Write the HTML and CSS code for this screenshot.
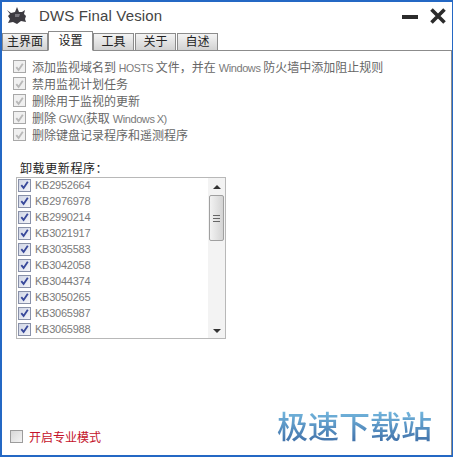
FILE: index.html
```html
<!DOCTYPE html>
<html>
<head>
<meta charset="utf-8">
<title>DWS Final Vesion</title>
<link rel="stylesheet" href="styles.css">
</head>
<body>
<svg class="defs" width="0" height="0">
    <symbol id="tick" viewBox="0 0 12 12">
        <path d="M2.5 6.2 L5 9.2 L9.6 2.4" fill="none" stroke-width="2"/>
    </symbol>
</svg>
<div class="window">
    <header class="titlebar">
        <svg class="logo" width="22" height="20" viewBox="0 0 22 20">
            <path d="M1 4 L5 7 L9 6 L11 1 L13 6 L16 6 L19 4 L18 8 L20 10 L19 13 L20 16 L15 15 L11 18 L7 16 L2 17 L4 13 L2 10 L4 8 Z" fill="#3c3a40"/>
            <path d="M9 8 L14 8 L13 11 L9 11 Z" fill="#77757c"/>
        </svg>
        <h1 class="title">DWS Final Vesion</h1>
        <svg class="winbtn" width="18" height="18" viewBox="0 0 18 18">
            <rect x="0" y="8" width="16" height="4" fill="#2b2b2b"/>
        </svg>
        <svg class="winbtn" width="18" height="18" viewBox="0 0 18 18">
            <path d="M2.5 2.5 L15.5 15.5 M15.5 2.5 L2.5 15.5" stroke="#2b2b2b" stroke-width="3.6" fill="none"/>
        </svg>
    </header>

    <nav class="tabs">
        <span class="tab tab-wide">主界面</span>
        <span class="tab active">设置</span>
        <span class="tab">工具</span>
        <span class="tab">关于</span>
        <span class="tab">自述</span>
    </nav>

    <main class="panel">
        <div class="options">
            <label class="option"><span class="check off"><svg width="12" height="12"><use href="#tick"/></svg></span><span class="text">添加监视域名到 <span class="lat caps">HOSTS</span> 文件，并在 <span class="lat">Windows</span> 防火墙中添加阻止规则</span></label>
            <label class="option"><span class="check off"><svg width="12" height="12"><use href="#tick"/></svg></span><span class="text">禁用监视计划任务</span></label>
            <label class="option"><span class="check off"><svg width="12" height="12"><use href="#tick"/></svg></span><span class="text">删除用于监视的更新</span></label>
            <label class="option"><span class="check off"><svg width="12" height="12"><use href="#tick"/></svg></span><span class="text">删除 <span class="lat caps">GWX(</span>获取 <span class="lat">Windows X)</span></span></label>
            <label class="option"><span class="check off"><svg width="12" height="12"><use href="#tick"/></svg></span><span class="text">删除键盘记录程序和遥测程序</span></label>
        </div>

        <div class="updates-label">卸载更新程序：</div>
        <div class="listbox">
            <ul class="items">
                <li><span class="check on"><svg width="12" height="12"><use href="#tick"/></svg></span>KB2952664</li>
                <li><span class="check on"><svg width="12" height="12"><use href="#tick"/></svg></span>KB2976978</li>
                <li><span class="check on"><svg width="12" height="12"><use href="#tick"/></svg></span>KB2990214</li>
                <li><span class="check on"><svg width="12" height="12"><use href="#tick"/></svg></span>KB3021917</li>
                <li><span class="check on"><svg width="12" height="12"><use href="#tick"/></svg></span>KB3035583</li>
                <li><span class="check on"><svg width="12" height="12"><use href="#tick"/></svg></span>KB3042058</li>
                <li><span class="check on"><svg width="12" height="12"><use href="#tick"/></svg></span>KB3044374</li>
                <li><span class="check on"><svg width="12" height="12"><use href="#tick"/></svg></span>KB3050265</li>
                <li><span class="check on"><svg width="12" height="12"><use href="#tick"/></svg></span>KB3065987</li>
                <li><span class="check on"><svg width="12" height="12"><use href="#tick"/></svg></span>KB3065988</li>
            </ul>
            <div class="scrollbar">
                <span class="arrow arrow-up"></span>
                <div class="thumb"><span class="grip"></span></div>
                <span class="arrow arrow-down"></span>
            </div>
        </div>

        <label class="pro"><span class="check pro-box"></span>开启专业模式</label>
    </main>
    <div class="watermark">极速下载站</div>
</div>
</body>
</html>
```

FILE: styles.css
```css
* {
    box-sizing: border-box;
}
html, body {
    height: 100%;
}
body {
    margin: 0;
    background: #fff;
    font-family: 'Liberation Sans', 'Noto Sans CJK SC', sans-serif;
    font-size: 12px;
    color: #666;
}
.defs {
    position: absolute;
}
.window {
    position: relative;
    display: flex;
    flex-direction: column;
    height: 457px;
    border: 1px solid #2468c4;
    border-left-width: 2px;
    border-bottom-width: 2px;
    border-top-width: 2px;
    background: #fff;
}
.titlebar {
    display: flex;
    align-items: center;
    height: 29px;
    padding: 0 5px 2px 4px;
    flex: none;
}
.logo {
    flex: none;
}
.title {
    flex: 1;
    margin: 0 0 0 11px;
    font-size: 15px;
    font-weight: normal;
    color: #444;
    letter-spacing: 0.15px;
}
.winbtn {
    margin-left: 9px;
}
.tabs {
    display: flex;
    align-items: flex-end;
    height: 20px;
    flex: none;
    position: relative;
    z-index: 1;
    margin-bottom: -1px;
}
.tab {
    width: 41px;
    height: 18px;
    margin-right: 1px;
    border: 1px solid #8c8c8c;
    background: linear-gradient(#f4f4f4, #d2d2d2);
    line-height: 17px;
    text-align: center;
    color: #222;
}
.tab-wide {
    width: 46px;
    margin-right: 0;
}
.tab.active {
    width: 45px;
    height: 20px;
    margin-right: 0;
    background: #fff;
    border-bottom-color: #fff;
    line-height: 19px;
}
.panel {
    flex: 1;
    display: flex;
    flex-direction: column;
    border-top: 1px solid #8c8c8c;
    border-right: 1px solid #8c8c8c;
    padding: 7px 0 10px 0;
}
.options {
    padding-left: 11px;
}
.option {
    display: flex;
    align-items: center;
    height: 17px;
    white-space: nowrap;
}
.text {
    word-spacing: -0.5px;
}
.lat {
    font-size: 11px;
    letter-spacing: -0.4px;
    color: #7a7a7a;
}
.lat.caps {
    font-size: 10.5px;
}
.check {
    display: inline-flex;
    flex: none;
    width: 13px;
    height: 13px;
    margin-right: 6px;
    border: 1px solid #a8a8a8;
    background: #f2f2f2;
    align-items: center;
    justify-content: center;
}
.check svg {
    display: block;
}
.check.off {
    stroke: #b8b8b8;
    background: #f0f0f0;
}
.check.on {
    stroke: #38489a;
    border-color: #8890a8;
    background: linear-gradient(135deg, #d0d6e6, #f4f4f8);
    margin-right: 4px;
}
.updates-label {
    margin: 18px 0 0 18px;
    height: 16px;
    color: #222;
    line-height: 17px;
    letter-spacing: 0.6px;
}
.listbox {
    display: flex;
    width: 210px;
    height: 162px;
    margin: 0 0 0 14px;
    border: 1px solid #b8b8b8;
}
.items {
    flex: 1;
    margin: -1px 0 0;
    padding: 0 0 0 1px;
    list-style: none;
}
.items li {
    display: flex;
    align-items: center;
    height: 16px;
    font-size: 11px;
    letter-spacing: -0.25px;
    color: #7a7a7a;
}
.scrollbar {
    display: flex;
    flex-direction: column;
    align-items: center;
    width: 17px;
    background: #f3f3f3;
    padding: 7px 0 5px;
}
.arrow {
    width: 0;
    height: 0;
    border-left: 4px solid transparent;
    border-right: 4px solid transparent;
}
.arrow-up {
    border-bottom: 4px solid #333;
}
.arrow-down {
    margin-top: auto;
    border-top: 4px solid #333;
}
.thumb {
    display: flex;
    align-items: center;
    justify-content: center;
    width: 15px;
    height: 46px;
    margin-top: 6px;
    border: 1px solid #a0a0a0;
    border-radius: 2px;
    background: linear-gradient(90deg, #f2f2f2, #d4d4d4);
}
.grip {
    width: 7px;
    height: 7px;
    background: repeating-linear-gradient(#666 0 1px, transparent 1px 3px);
}
.pro {
    display: flex;
    align-items: center;
    margin-top: auto;
    margin-left: 8px;
    height: 17px;
    color: #c4122a;
}
.check.pro-box {
    border: 1px solid #9c9c9c;
    background: linear-gradient(135deg, #d8d8d8, #f4f4f4);
}
.watermark {
    position: absolute;
    right: 20px;
    bottom: 12px;
    font-family: 'Noto Sans CJK SC', sans-serif;
    font-size: 31px;
    font-weight: 500;
    line-height: 36px;
    background: linear-gradient(#79bfe4, #3f6fa8);
    -webkit-background-clip: text;
    background-clip: text;
    color: transparent;
}
```
